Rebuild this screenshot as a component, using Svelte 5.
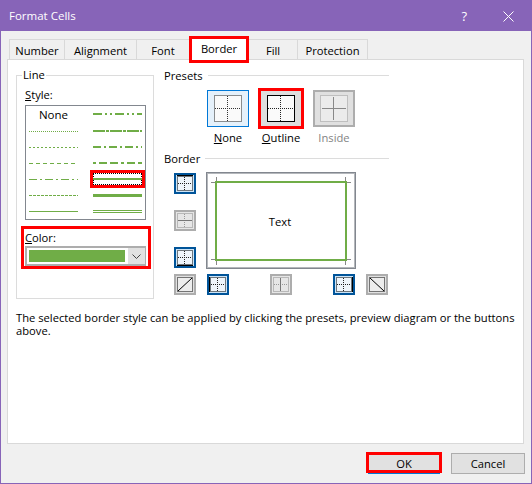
<script lang="ts">
	const tabs = ['Number', 'Alignment', 'Font', 'Border', 'Fill', 'Protection'];
	const tabWidths = [56, 72, 53, 56, 49, 70];

	// left and right column of the line style list
	const leftLines = [
		{ none: true },
		{ dash: '1 1', w: 1 },
		{ dash: '2 2', w: 1 },
		{ dash: '4 3', w: 1 },
		{ dash: '8 3 2 3', w: 1 },
		{ dash: '3 1', w: 1 },
		{ dash: '', w: 1 }
	];
	const rightLines = [
		{ dash: '9 3 2 3 2 3', w: 2, y: 2 },
		{ dash: '12 1 3 1', w: 2, y: 3 },
		{ dash: '8 3 2 3', w: 2, y: 3 },
		{ dash: '3 3 8 3 8 3', w: 2, y: 3 },
		{ dash: '', w: 2, y: 3, selected: true },
		{ dash: '', w: 3, y: 3.5 },
		{ double: true }
	];

	const cellFill: Record<string, string> = { active: '#eef5fb', off: 'none', diag: '#ededed' };
</script>

{#snippet cell(line: string, kind: string)}
	<button class="edge {kind}">
		<svg width="18" height="17" viewBox="0 0 18 17">
			<rect x="1.500" y="1.500" width="15" height="14" fill={cellFill[kind]} stroke={kind === 'off' ? '#8a8a8a' : '#000'} stroke-dasharray="1 1" />
			{#if kind !== 'diag'}
				<path d="M8.500 2V15M2 8.500H16" fill="none" stroke={kind === 'off' ? '#999' : '#222'} stroke-dasharray="1 1" />
			{/if}
			<path d={line} fill="none" stroke={kind === 'off' ? '#777' : '#000'} />
		</svg>
	</button>
{/snippet}

{#snippet preset(name: string, key: string, cls: string, frame: string, cross: string)}
	<div class="preset">
		<button class="preset-btn {cls}">
			<svg width="28" height="27" viewBox="0 0 28 27">
				<rect x="0.500" y="0.500" width="27" height="26" fill={cls === 'inside' ? '#ebebeb' : '#fafafa'} stroke={frame} stroke-dasharray={cls === 'outline' ? '' : '1 1'} />
				{#if cls === 'inside'}
					<path d="M13.500 2V25M2 13.500H26" fill="none" stroke={cross} />
				{:else}
					<path d="M13.500 1V26M1 13.500H27" fill="none" stroke={cross} stroke-dasharray="1 1" />
				{/if}
			</svg>
		</button>
		<span class="preset-label" class:dim={cls === 'inside'}>{#if key}<u>{key}</u>{/if}{name}</span>
	</div>
{/snippet}

<div class="dialog">
	<header class="titlebar">
		<span class="title">Format Cells</span>
		<span class="help">?</span>
		<svg class="close" width="11" height="11" viewBox="0 0 11 11">
			<path d="M0.500 0.500L10.500 10.500M10.500 0.500L0.500 10.500" stroke="#fff" fill="none" />
		</svg>
	</header>

	<div class="tabs">
		{#each tabs as tab, i}
			<div class="tab" class:current={tab === 'Border'} style="width: {tabWidths[i]}px">{tab}</div>
		{/each}
	</div>

	<main class="panel">
		<div class="columns">
			<fieldset class="line-group">
				<legend>Line</legend>
				<div class="field-label"><u>S</u>tyle:</div>
				<div class="style-list">
					<div class="style-col">
						{#each leftLines as l}
							<div class="style-item">
								{#if l.none}
									<span class="none-label">None</span>
								{:else}
									<svg width="49" height="4" viewBox="0 0 49 4">
										<line x1="0" y1="2.500" x2="49" y2="2.500" stroke="#70ad47" stroke-width={l.w} stroke-dasharray={l.dash} />
									</svg>
								{/if}
							</div>
						{/each}
					</div>
					<div class="style-col wide">
						{#each rightLines as l}
							<div class="style-item" class:picked={l.selected}>
								<svg width="49" height="6" viewBox="0 0 49 6">
									{#if l.double}
										<path d="M0 2.500H49M0 4.500H49" stroke="#70ad47" fill="none" />
									{:else}
										<line x1="0" y1={l.y} x2="49" y2={l.y} stroke="#70ad47" stroke-width={l.w} stroke-dasharray={l.dash} />
									{/if}
								</svg>
							</div>
						{/each}
					</div>
				</div>
				<div class="color-box">
					<div class="field-label"><u>C</u>olor:</div>
					<div class="combo">
						<div class="swatch"></div>
						<div class="combo-arrow">
							<svg width="9" height="5" viewBox="0 0 9 5"><path d="M0.500 0.500L4.500 4.500L8.500 0.500" fill="none" stroke="#444" /></svg>
						</div>
					</div>
				</div>
			</fieldset>

			<section class="right">
				<div class="section-head"><span>Presets</span><i></i></div>
				<div class="presets">
					{@render preset('one', 'N', 'none', '#222', '#333')}
					{@render preset('utline', 'O', 'outline', '#000', '#222')}
					{@render preset('Inside', '', 'inside', '#999', '#888')}
				</div>

				<div class="section-head border-head"><span>Border</span><i></i></div>
				<div class="border-edit">
					<div class="side">
						{@render cell('M1 0.500H17', 'active')}
						{@render cell('M2 8.500H16', 'off')}
						{@render cell('M1 16.500H17', 'active')}
					</div>
					<div class="preview">
						<svg width="148" height="95" viewBox="0 0 148 95">
							<rect x="9" y="9" width="130" height="78" fill="none" stroke="#70ad47" stroke-width="2" />
							<path d="M4 9.500H8M9.500 4V8M140 9.500H144M138.500 4V8M4 86.500H8M9.500 88V92M140 86.500H144M138.500 88V92" stroke="#888" fill="none" />
							<text x="73" y="53" text-anchor="middle" class="preview-text">Text</text>
						</svg>
					</div>
					<div class="diag">{@render cell('M2 15L16 2', 'diag')}</div>
					<div class="bottom">
						{@render cell('M0.500 1V16', 'active')}
						{@render cell('M8.500 2V15', 'off')}
						{@render cell('M17.500 1V16', 'active')}
						{@render cell('M2 2L16 15', 'diag')}
					</div>
				</div>
			</section>
		</div>

		<p class="desc">The selected border style can be applied by clicking the presets, preview diagram or the buttons above.</p>
	</main>

	<footer class="footer">
		<button class="action ok">OK</button>
		<button class="action">Cancel</button>
	</footer>
</div>

<style>
	:global(body) {
		margin: 0;
	}

	.dialog {
		width: 532px;
		height: 484px;
		box-sizing: border-box;
		border: 1px solid #8764b8;
		background: #f0f0f0;
		color: #000;
		font-family: "Open Sans", "Noto Sans", sans-serif;
		font-size: 11.2px;
		line-height: 16px;
		display: flex;
		flex-direction: column;
	}

	.titlebar {
		height: 30px;
		flex: none;
		margin: -1px -1px 0;
		padding: 1px 18px 0 9px;
		background: #8764b8;
		color: #fff;
		display: flex;
		align-items: center;
		font-size: 11.5px;
	}

	.title {
		flex: 1;
	}

	.help {
		margin-right: 36px;
		font-size: 13px;
	}

	.tabs {
		height: 28px;
		flex: none;
		margin-left: 8px;
		display: flex;
		align-items: flex-end;
	}

	.tab {
		height: 20px;
		box-sizing: border-box;
		border: 1px solid #d9d9d9;
		border-bottom: 0;
		border-left-width: 0;
		text-align: center;
		line-height: 21px;
		flex: none;
	}

	.tab:first-child {
		border-left-width: 1px;
	}

	.tab.current {
		height: 23px;
		margin: 0 2px -2px 1px;
		background: #fff;
		border: 0;
		outline: 3px solid #f00;
		outline-offset: -1px;
		position: relative;
		line-height: 22px;
		z-index: 1;
	}

	.panel {
		height: 385px;
		flex: none;
		margin: 0 7px 0 6px;
		box-sizing: border-box;
		border: 1px solid #d9d9d9;
		background: #fff;
		padding: 0 8px;
	}

	.columns {
		display: flex;
		gap: 10px;
		align-items: flex-start;
	}

	.line-group {
		width: 138px;
		height: 232px;
		box-sizing: border-box;
		margin: 7px 0 0;
		padding: 4px 7px 0 8px;
		border: 1px solid #dcdcdc;
		min-width: 0;
	}

	legend {
		padding: 0 1px;
		margin-left: -3px;
	}

	.field-label {
		height: 16px;
	}

	.style-list {
		width: 121px;
		height: 115px;
		box-sizing: border-box;
		margin-top: 2px;
		border: 1px solid #82878f;
		padding: 1px 3px 0;
		display: flex;
		justify-content: space-between;
	}

	.style-col {
		width: 49px;
		display: flex;
		flex-direction: column;
	}

	.style-item {
		height: 16px;
		display: flex;
		align-items: center;
		justify-content: center;
		flex: none;
	}

	.style-item svg {
		display: block;
		flex: none;
	}

	.none-label {
		font-size: 11.5px;
	}

	.picked {
		height: 12px;
		margin: 2px 0;
		box-sizing: border-box;
		border: 1px dotted #000;
		outline: 3px solid #f00;
	}

	.color-box {
		width: 124px;
		height: 37px;
		margin: 9px 0 0 -1px;
		padding: 1px 0 0 1px;
		box-sizing: border-box;
		outline: 3px solid #f00;
	}

	.combo {
		width: 121px;
		height: 20px;
		box-sizing: border-box;
		border: 2px solid #adadad;
		border-right-width: 1px;
		background: #fff;
		padding-left: 2px;
		display: flex;
		align-items: center;
		justify-content: space-between;
	}

	.swatch {
		width: 96px;
		height: 12px;
		background: #70ad47;
	}

	.combo-arrow {
		width: 17px;
		height: 16px;
		background: #e1e1e1;
		display: flex;
		align-items: center;
		justify-content: center;
	}

	.right {
		width: 225px;
		margin-top: 8px;
	}

	.section-head {
		height: 16px;
		display: flex;
		align-items: center;
		gap: 5px;
	}

	.section-head i {
		flex: 1;
		height: 1px;
		background: #dcdcdc;
		margin-top: -1px;
	}

	.presets {
		margin: 6px 0 0 43px;
		display: grid;
		grid-template-columns: 42px 42px 42px;
		gap: 11px;
	}

	.preset {
		display: flex;
		flex-direction: column;
		align-items: center;
		white-space: nowrap;
	}

	.preset-btn {
		width: 42px;
		height: 37px;
		box-sizing: border-box;
		padding: 0;
		border: 1px solid #adadad;
		background: #e1e1e1;
		display: flex;
		align-items: center;
		justify-content: center;
	}

	.preset-btn.none {
		border-color: #0078d7;
		background: #e5f1fb;
	}

	.preset-btn.outline {
		outline: 3px solid #f00;
		outline-offset: -1px;
		background: #dedede;
	}

	.preset-btn.inside {
		background: #e0e0e0;
		border: 2px solid #adadad;
	}

	.preset-label {
		margin-top: 3px;
	}

	.dim {
		color: #838383;
	}

	.border-head {
		margin-top: 5px;
	}

	.border-edit {
		margin: 5px 0 0 10px;
		display: grid;
		grid-template-columns: 22px auto;
		column-gap: 10px;
		row-gap: 5px;
	}

	.side {
		padding-top: 1px;
		display: flex;
		flex-direction: column;
		gap: 16px;
	}

	.preview {
		width: 150px;
		height: 97px;
		box-sizing: border-box;
		border: 1px solid #82878f;
		box-shadow: inset 0 0 0 1px #b4b7bb;
	}

	.preview svg {
		display: block;
	}

	.preview-text {
		font-family: "Open Sans", "Noto Sans", sans-serif;
		font-size: 11.2px;
		fill: #000;
	}

	.bottom {
		margin-left: 1px;
		display: grid;
		grid-template-columns: 63px 63px 33px 22px;
	}

	.edge {
		width: 22px;
		height: 21px;
		box-sizing: border-box;
		padding: 0;
		border: 2px solid #adadad;
		background: #e1e1e1;
		display: flex;
		align-items: center;
		justify-content: center;
	}

	.edge.active {
		border-color: #005499;
		background: #cce4f7;
	}

	.edge.off {
		background: #e6e6e6;
	}

	.desc {
		margin: 12px 0 0;
		line-height: 13px;
		width: 505px;
	}

	.footer {
		flex: 1;
		padding: 9px 6px 0 0;
		display: flex;
		justify-content: flex-end;
		align-items: flex-start;
		gap: 11px;
	}

	.action {
		width: 74px;
		height: 21px;
		box-sizing: border-box;
		padding: 0;
		border: 1px solid #adadad;
		background: #e1e1e1;
		font: inherit;
		color: #000;
	}

	.ok {
		width: 72px;
		height: 17px;
		margin-top: 1px;
		line-height: 17px;
		outline: 3px solid #f00;
		outline-offset: -1px;
		box-shadow: 0 3px 0 0 #0078d7;
	}
</style>
